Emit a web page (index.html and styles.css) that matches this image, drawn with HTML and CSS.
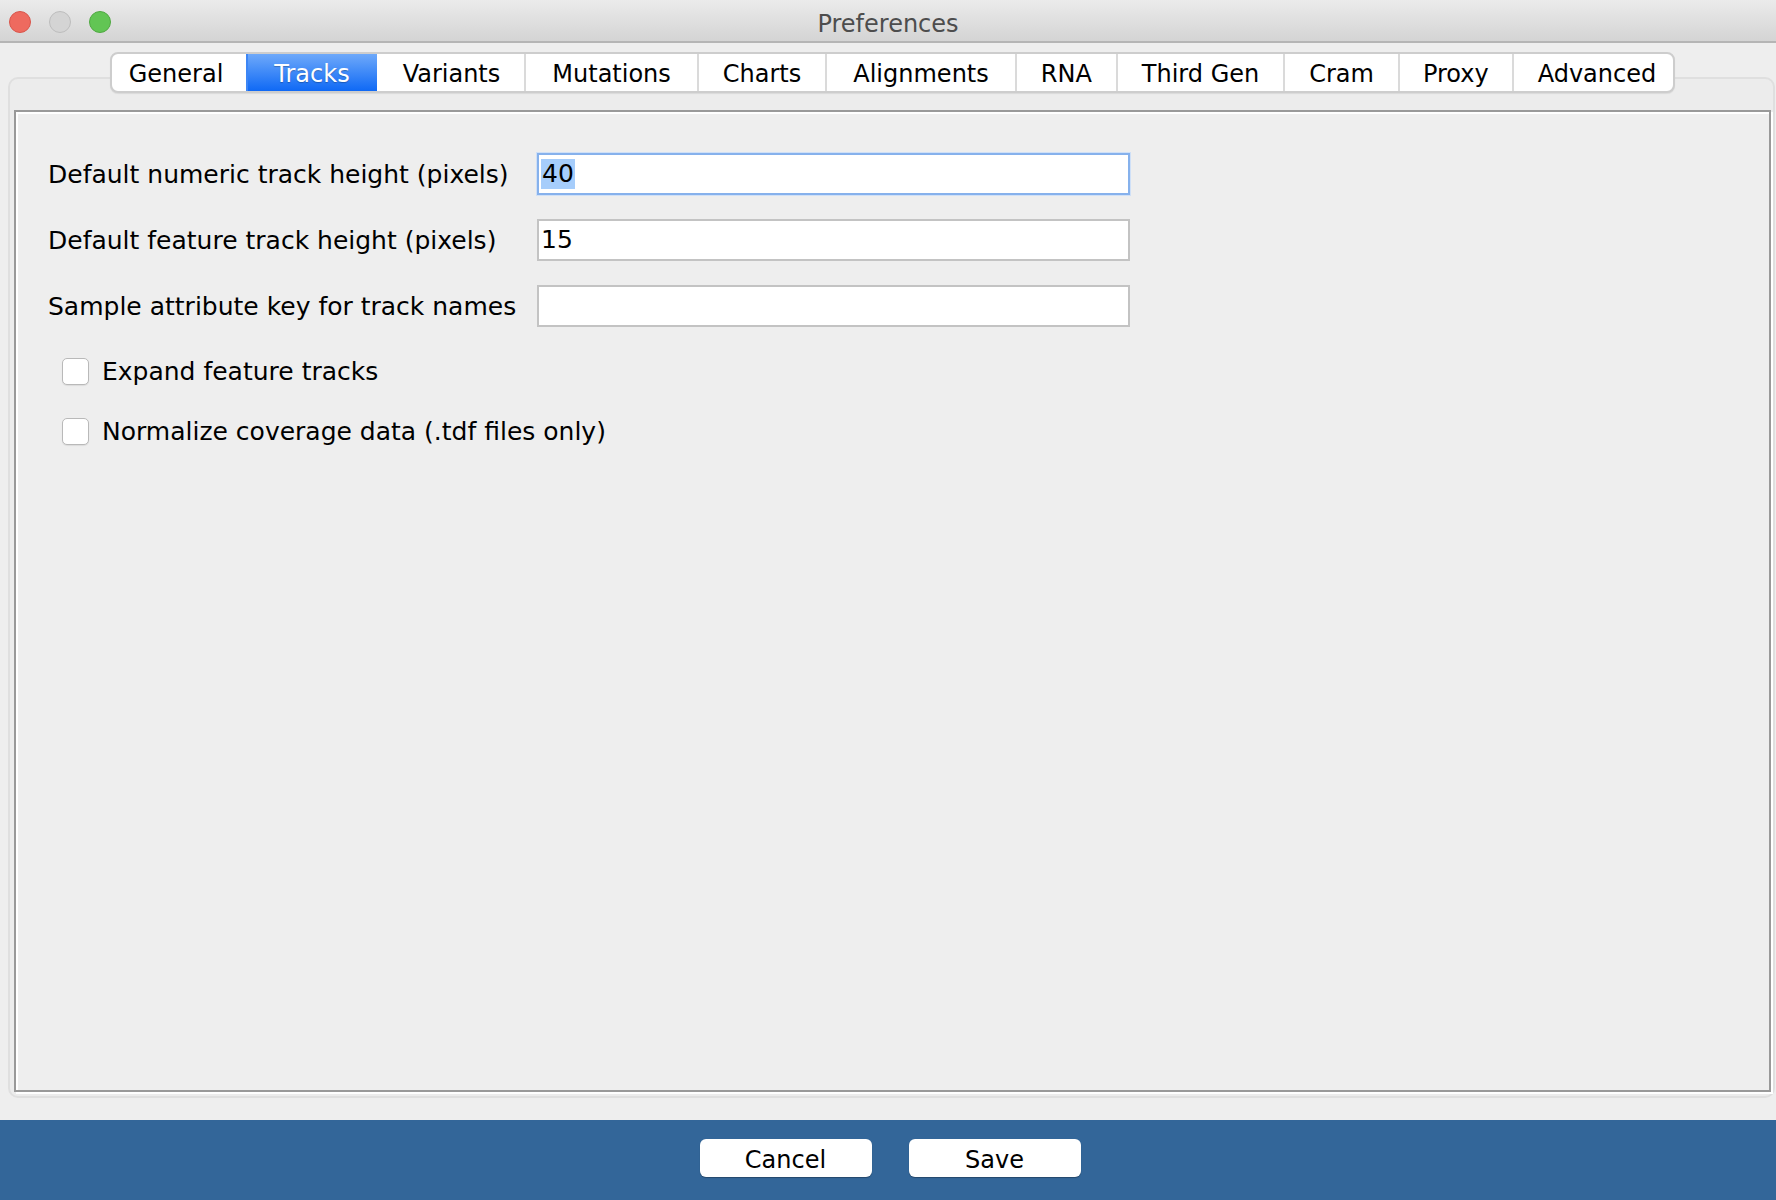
FILE: index.html
```html
<!DOCTYPE html>
<html>
<head>
<meta charset="utf-8">
<title>Preferences</title>
<link rel="stylesheet" href="styles.css">
</head>
<body>
<div class="window">
  <div class="titlebar">
    <div class="lights">
      <span class="light red"></span>
      <span class="light gray"></span>
      <span class="light green"></span>
    </div>
    <div class="title">Preferences</div>
  </div>
  <div class="main">
    <div class="tabpane">
      <div class="tabs">
        <div class="tab first">General</div>
        <div class="tab active">Tracks</div>
        <div class="tab">Variants</div>
        <div class="tab wide">Mutations</div>
        <div class="tab">Charts</div>
        <div class="tab wide">Alignments</div>
        <div class="tab">RNA</div>
        <div class="tab">Third Gen</div>
        <div class="tab">Cram</div>
        <div class="tab narrow">Proxy</div>
        <div class="tab last">Advanced</div>
      </div>
      <div class="box">
        <div class="panel">
          <div class="form">
            <div class="row">
              <label class="label">Default numeric track height (pixels)</label>
              <div class="field focused"><span class="sel">40</span></div>
            </div>
            <div class="row">
              <label class="label">Default feature track height (pixels)</label>
              <div class="field">15</div>
            </div>
            <div class="row">
              <label class="label">Sample attribute key for track names</label>
              <div class="field"></div>
            </div>
            <div class="check">
              <span class="cbox"></span>
              <span class="clabel">Expand feature tracks</span>
            </div>
            <div class="check">
              <span class="cbox"></span>
              <span class="clabel">Normalize coverage data (.tdf files only)</span>
            </div>
          </div>
        </div>
      </div>
    </div>
  </div>
  <div class="footer">
    <button class="btn">Cancel</button>
    <button class="btn">Save</button>
  </div>
</div>
</body>
</html>
```

FILE: styles.css
```css
html, body {
  margin: 0;
  padding: 0;
}
body {
  width: 1776px;
  height: 1200px;
  background: #eeeeee;
  font-family: "DejaVu Sans", "Liberation Sans", sans-serif;
  color: #000;
  overflow: hidden;
}
.window {
  width: 1776px;
  height: 1200px;
  display: flex;
  flex-direction: column;
}
.titlebar {
  height: 41px;
  border-bottom: 2px solid #b5b5b5;
  background: linear-gradient(#ebebeb, #d4d4d4);
  display: flex;
  align-items: center;
  position: relative;
}
.lights {
  display: flex;
  gap: 18px;
  padding-left: 9px;
  padding-top: 3px;
  align-items: center;
}
.light {
  width: 20px;
  height: 20px;
  border-radius: 50%;
  display: block;
}
.light.red {
  background: #ee6a5f;
  border: 1px solid #d9554b;
}
.light.gray {
  background: #d4d4d4;
  border: 1px solid #bdbdbd;
}
.light.green {
  background: #62c554;
  border: 1px solid #50a942;
}
.title {
  position: absolute;
  left: 0;
  right: 0;
  top: 4px;
  line-height: 41px;
  text-align: center;
  font-size: 24px;
  color: #4d4d4d;
}
.main {
  flex: 1;
  display: flex;
  flex-direction: column;
  padding: 9px 1px 22px 8px;
}
.tabpane {
  flex: 1;
  display: flex;
  flex-direction: column;
}
.tabs {
  align-self: center;
  display: flex;
  height: 37px;
  margin-left: 2px;
  border: 2px solid #cdcdcd;
  border-radius: 8px;
  background: #fff;
  position: relative;
  z-index: 2;
  box-shadow: 0 1px 1px rgba(0,0,0,0.08);
}
.tab {
  font-size: 24px;
  line-height: 34px;
  padding: 3px 24px 0;
  border-left: 2px solid #dadada;
  white-space: nowrap;
}
.tab.first {
  border-left: none;
  padding-left: 17px;
  padding-right: 23px;
  border-radius: 6px 0 0 6px;
}
.tab.wide {
  padding-left: 26px;
  padding-right: 26px;
}
.tab.narrow {
  padding-left: 23px;
  padding-right: 23px;
}
.tab.last {
  padding-right: 17px;
  border-radius: 0 6px 6px 0;
}
.tab.active {
  background: linear-gradient(#6ea9fa, #0f69f5);
  color: #fff;
  padding-left: 26px;
  padding-right: 27px;
  border-left-color: #3d86f5;
  text-shadow: 0 1px 1px rgba(0,0,0,0.25);
}
.tab.active + .tab {
  border-left-color: #fff;
}
.box {
  flex: 1;
  margin-top: -16px;
  border: 2px solid #dfdfdf;
  border-radius: 10px;
  background: #ececec;
  padding: 31px 0 2px 4px;
  display: flex;
  flex-direction: column;
}
.panel {
  flex: 1;
  border: 2px solid #999999;
  box-shadow: inset 2px 2px 0 #ffffff, 2px 2px 0 #ffffff;
  margin-right: 2px;
  margin-bottom: 2px;
  background: #eeeeee;
}
.form {
  padding: 41px 0 0 32px;
  display: flex;
  flex-direction: column;
}
.row {
  display: flex;
  align-items: center;
  height: 42px;
  margin-bottom: 24px;
}
.label {
  width: 489px;
  font-size: 25px;
}
.field {
  box-sizing: border-box;
  width: 593px;
  height: 42px;
  background: #fff;
  border: 2px solid #c3c3c3;
  font-size: 25px;
  line-height: 38px;
  padding-left: 2px;
}
.field.focused {
  border-color: #86b1ec;
  box-shadow: 0 0 0 1px #cfe0f7;
}
.sel {
  background: #a6cdfb;
  display: inline-block;
  line-height: 30px;
  padding: 0 1px;
}
.check {
  display: flex;
  align-items: center;
  height: 40px;
  padding-left: 14px;
  margin-bottom: 20px;
}
.cbox {
  box-sizing: border-box;
  width: 27px;
  height: 27px;
  border: 1px solid #b9b9b9;
  border-radius: 5px;
  background: #fff;
  box-shadow: 0 1px 1px rgba(0,0,0,0.08);
  margin-right: 13px;
}
.clabel {
  font-size: 25px;
}
.footer {
  height: 80px;
  background: #336699;
  display: flex;
  justify-content: center;
  align-items: flex-start;
  gap: 37px;
  padding-top: 19px;
  padding-left: 4px;
  box-sizing: border-box;
}
.btn {
  width: 172px;
  height: 38px;
  border: none;
  border-radius: 6px;
  background: #fff;
  font-family: "DejaVu Sans", "Liberation Sans", sans-serif;
  font-size: 24px;
  line-height: 38px;
  padding: 2px 0 0;
  color: #000;
  box-shadow: 0 1px 1px rgba(0,0,0,0.3);
}
```
